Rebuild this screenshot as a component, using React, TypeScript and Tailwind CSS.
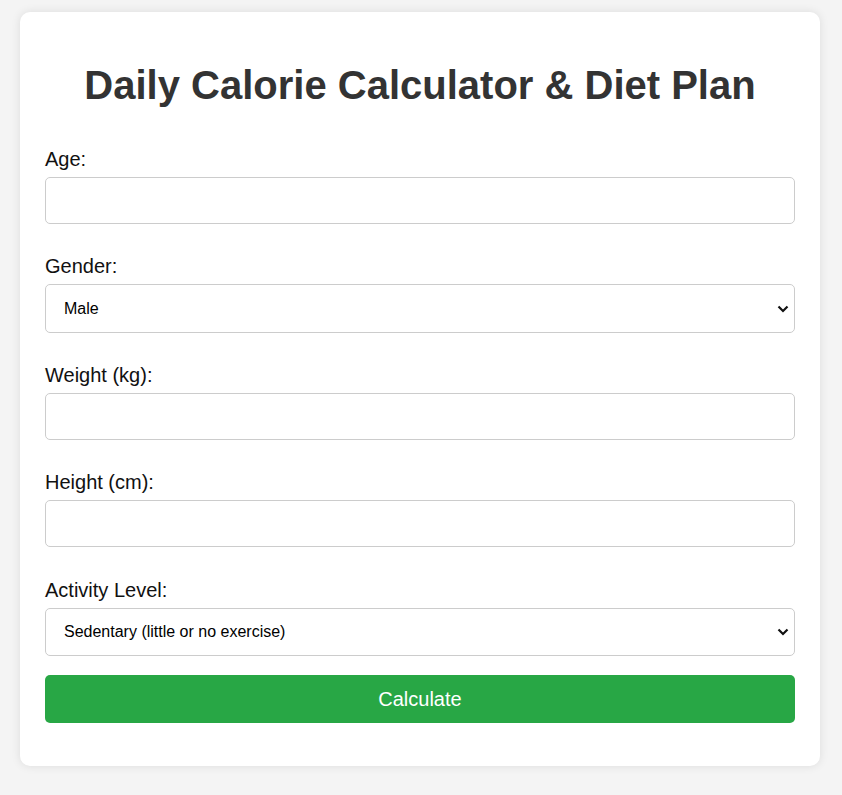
export default function App() {
  return (
    <div className="min-h-screen bg-[#f4f4f4] pt-[12px] pb-[29px] font-['Liberation_Sans',Arial,sans-serif]">
      <div className="ml-[20px] w-[800px] rounded-[10px] bg-white px-[25px] pt-[50px] pb-[43px] shadow-[0_0_10px_rgba(0,0,0,0.1)]">
        <h1 className="mb-[40px] text-center text-[40px] font-bold leading-[46px] text-[#333]">
          Daily Calorie Calculator &amp; Diet Plan
        </h1>

        <form onSubmit={(e) => e.preventDefault()}>
          <div className="mb-[31px]">
            <label className="mb-[6px] block text-[20px] leading-[23px] text-[#111]">Age:</label>
            <input type="number" className="block h-[47px] w-full rounded-[5px] border border-[#ccc] px-[18px] text-[16px]" />
          </div>

          <div className="mb-[31px]">
            <label className="mb-[6px] block text-[20px] leading-[23px] text-[#111]">Gender:</label>
            <div className="relative">
              <select className="block h-[49px] w-full appearance-none rounded-[5px] border border-[#ccc] bg-white pl-[18px] text-[16px] text-black">
                <option>Male</option>
                <option>Female</option>
              </select>
              <Chevron />
            </div>
          </div>

          <div className="mb-[31px]">
            <label className="mb-[6px] block text-[20px] leading-[23px] text-[#111]">Weight (kg):</label>
            <input type="number" className="block h-[47px] w-full rounded-[5px] border border-[#ccc] px-[18px] text-[16px]" />
          </div>

          <div className="mb-[32px]">
            <label className="mb-[6px] block text-[20px] leading-[23px] text-[#111]">Height (cm):</label>
            <input type="number" className="block h-[47px] w-full rounded-[5px] border border-[#ccc] px-[18px] text-[16px]" />
          </div>

          <div className="mb-[19px]">
            <label className="mb-[6px] block text-[20px] leading-[23px] text-[#111]">Activity Level:</label>
            <div className="relative">
              <select className="block h-[48px] w-full appearance-none rounded-[5px] border border-[#ccc] bg-white pl-[18px] text-[16px] text-black">
                <option>Sedentary (little or no exercise)</option>
                <option>Lightly active (light exercise 1-3 days/week)</option>
                <option>Moderately active (moderate exercise 3-5 days/week)</option>
                <option>Very active (hard exercise 6-7 days/week)</option>
                <option>Super active (very hard exercise &amp; physical job)</option>
              </select>
              <Chevron />
            </div>
          </div>

          <button type="submit" className="block h-[48px] w-full rounded-[5px] bg-[#28a745] text-[20px] text-white">
            Calculate
          </button>
        </form>
      </div>
    </div>
  );
}

function Chevron() {
  return (
    <svg
      className="pointer-events-none absolute right-[6px] top-1/2 -translate-y-1/2"
      width="12"
      height="8"
      viewBox="0 0 12 8"
      fill="none"
    >
      <path d="M1.5 1.5 L6 6 L10.5 1.5" stroke="#111" strokeWidth="2.2" />
    </svg>
  );
}
